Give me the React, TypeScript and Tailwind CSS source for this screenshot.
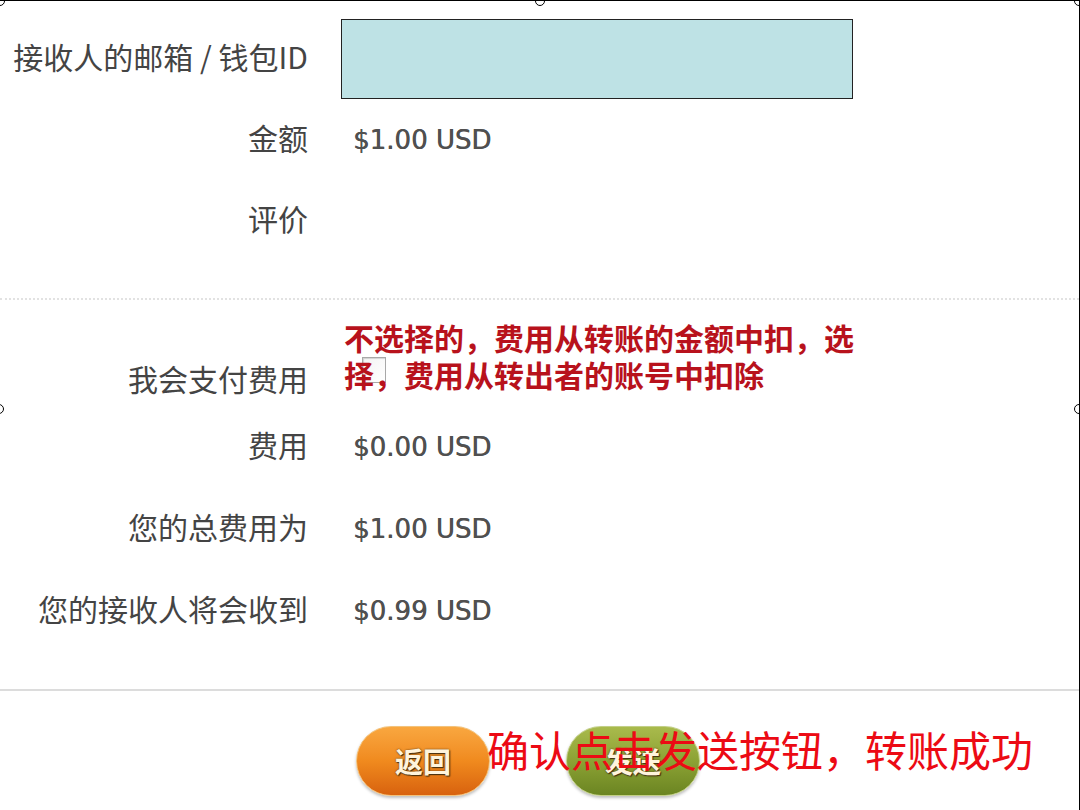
import React from 'react';

const CJK = '"Noto Sans CJK SC", "Noto Sans", sans-serif';

type Row = { label: string; value?: string; h: string };

const Handle: React.FC<{ className: string }> = ({ className }) => (
  <div className={`absolute w-[10px] h-[10px] rounded-full border border-black bg-white ${className}`} />
);

const Label: React.FC<{ children: React.ReactNode }> = ({ children }) => (
  <div className="w-[308px] shrink-0 pb-[6px] text-right text-[30px] leading-none text-[#444]" style={{ fontFamily: CJK }}>
    {children}
  </div>
);

const Amount: React.FC<{ children: React.ReactNode }> = ({ children }) => (
  <div className="pl-[12px] text-[26px] leading-none text-[#505050] [text-shadow:0.5px_0_0_#505050] [font-family:'DejaVu_Sans',sans-serif]">
    {children}
  </div>
);

const PillButton: React.FC<{ text: string; tone: 'orange' | 'green' }> = ({ text, tone }) => (
  <div
    className={`w-[134px] h-[70px] rounded-full flex items-center justify-center shadow-[0_2px_3px_rgba(0,0,0,0.25)] ${
      tone === 'orange'
        ? 'bg-gradient-to-b from-[#f9a73f] via-[#f08a1e] to-[#d8620e] border border-[#f3c27a]'
        : 'bg-gradient-to-b from-[#a9ba4c] via-[#8ca234] to-[#6b8522] border border-[#c2cf86]'
    }`}
  >
    <span
      className="text-[28px] font-bold text-[#fff4dc] [text-shadow:0_0_2px_#5a3a10,1px_1px_1px_#3a2a10]"
      style={{ fontFamily: CJK }}
    >
      {text}
    </span>
  </div>
);

const lower: Row[] = [
  { label: '费用', value: '$0.00 USD', h: 'h-[66px]' },
  { label: '您的总费用为', value: '$1.00 USD', h: 'h-[82px] mt-[8px]' },
  { label: '您的接收人将会收到', value: '$0.99 USD', h: 'h-[82px]' },
];

const App: React.FC = () => {
  return (
    <div className="relative w-[1080px] h-[810px] overflow-hidden bg-white border-t border-r border-black">
      {/* section 1: recipient / amount / note */}
      <div className="flex flex-col pt-[18px] h-[297px]">
        <div className="flex items-center h-[80px]">
          <Label>接收人的邮箱 / 钱包ID</Label>
          <div className="ml-[33px] w-[512px] h-[80px] bg-[#bee2e5] border border-[#222]" />
        </div>
        <div className="flex items-center h-[82px]">
          <Label>金额</Label>
          <div className="ml-[33px]">
            <Amount>$1.00 USD</Amount>
          </div>
        </div>
        <div className="flex items-center h-[80px]">
          <Label>评价</Label>
        </div>
      </div>

      <div className="border-t-2 border-dotted border-[#e2e2e2]" />

      {/* section 2: fees */}
      <div className="flex flex-col pt-[48px] h-[389px]">
        <div className="flex items-center h-[66px]">
          <Label>我会支付费用</Label>
          <div className="ml-[33px] self-start mt-[9px] pl-[21px]">
            <div className="w-[24px] h-[26px] border border-[#a8a8a8] bg-gradient-to-br from-[#f4f4f4] to-white shadow-[inset_1px_1px_1px_rgba(0,0,0,0.15)]" />
          </div>
        </div>
        {lower.map((r) => (
          <div key={r.label} className={`flex items-center ${r.h}`}>
            <Label>{r.label}</Label>
            <div className="ml-[33px]">
              <Amount>{r.value}</Amount>
            </div>
          </div>
        ))}
      </div>

      <div className="border-t-2 border-[#dcdcdc]" />

      {/* section 3: buttons */}
      <div className="flex gap-[76px] pl-[356px] pt-[35px]">
        <PillButton text="返回" tone="orange" />
        <PillButton text="发送" tone="green" />
      </div>

      {/* annotations laid over the form */}
      <div
        className="absolute left-[344px] top-[318px] text-[30px] leading-[37px] font-bold text-[#b8121c]"
        style={{ fontFamily: CJK }}
      >
        不选择的，费用从转账的金额中扣，选
        <br />
        择，费用从转出者的账号中扣除
      </div>
      <div
        className="absolute left-[487px] top-[722px] text-[42px] leading-[52px] text-[#ec0a14] whitespace-nowrap"
        style={{ fontFamily: CJK }}
      >
        确认点击发送按钮，转账成功
      </div>

      {/* selection handles */}
      <Handle className="-left-[5px] -top-[5px]" />
      <Handle className="left-[535px] -top-[5px]" />
      <Handle className="-right-[5px] -top-[5px]" />
      <Handle className="-left-[6px] top-[403px]" />
      <Handle className="-right-[5px] top-[403px]" />
    </div>
  );
};

export default App;
